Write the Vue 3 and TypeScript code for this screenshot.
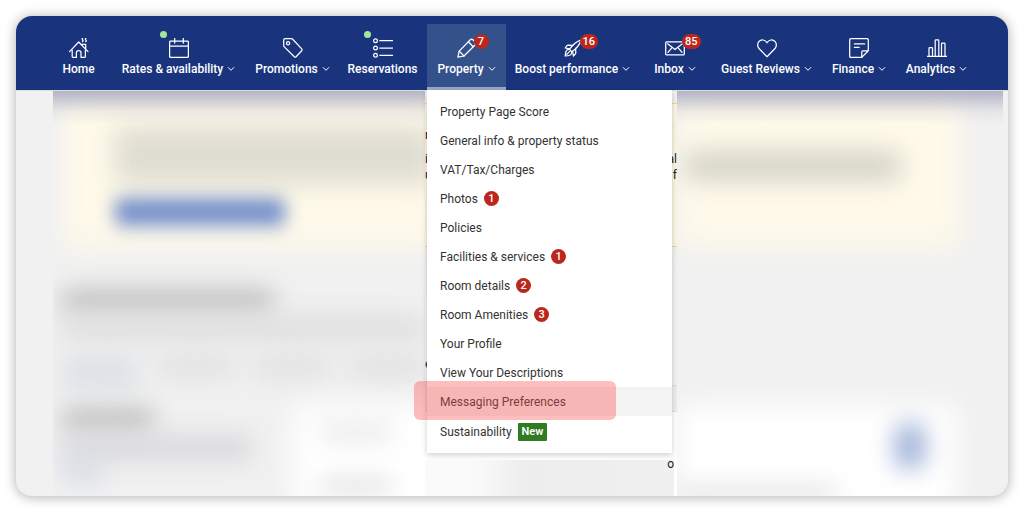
<script setup lang="ts">
interface NavItem {
  id: string
  label: string
  menu: boolean
  icon: string[]
  dot?: boolean
  badge?: number
}

interface MenuEntry {
  label: string
  count?: number
  tag?: string
  active?: boolean
}

const navItems: NavItem[] = [
  {
    id: 'home', label: 'Home', menu: false,
    icon: [
      'M.6 13.6 9.7 4l9.3 9.6',
      'M3.2 12.2v6.3q0 .8.8.8h3.4v-4.6q0-2 2.3-2t2.3 2v4.6h3.6q.8 0 .8-.8v-6.3',
      'M12.8 6.3h3.9v4.3',
      'M13.6.3q-.9.9 0 1.7t0 1.7M16.8.3q-.9.9 0 1.7t0 1.7',
    ],
  },
  {
    id: 'rates', label: 'Rates & availability', menu: true, dot: true,
    icon: ['M1.6 3.2h16.8q1 0 1 1v14.1q0 1-1 1H1.6q-1 0-1-1V4.2q0-1 1-1ZM.6 8h18.8', 'M5.7.5v4.6M14.3.5v4.6'],
  },
  {
    id: 'promotions', label: 'Promotions', menu: true,
    icon: ['M.7 2.2Q.7.7 2.2.7h6.1q.8 0 1.4.6l9 9.6q.8.9 0 1.8l-5.6 6q-.9.8-1.8 0L1.3 8.9Q.7 8.3.7 7.5Z', 'M3.5 5.2a1.6 1.6 0 1 0 3.2 0a1.6 1.6 0 1 0-3.2 0'],
  },
  {
    id: 'reservations', label: 'Reservations', menu: false, dot: true,
    icon: [
      'M.6 2.7a1.9 1.9 0 1 0 3.8 0a1.9 1.9 0 1 0-3.8 0M.6 10a1.9 1.9 0 1 0 3.8 0a1.9 1.9 0 1 0-3.8 0M.6 17.3a1.9 1.9 0 1 0 3.8 0a1.9 1.9 0 1 0-3.8 0',
      'M6.8 2.7h12.8M6.8 10h12.8M6.8 17.3h12.8',
    ],
  },
  {
    id: 'property', label: 'Property', menu: true, badge: 7,
    icon: ['M.9 19.1l1.3-6L13.3 1.7q1.3-1.3 2.6 0l2.4 2.4q1.3 1.3 0 2.6L7 18Z', 'M2.2 13.1 7 18M11.3 3.8l4.9 4.9'],
  },
  {
    id: 'boost', label: 'Boost performance', menu: true, badge: 16,
    icon: [
      'M6.4 11.4C8.8 8 13 3.4 18.2 1.8C16.6 7 12.4 11.4 8.8 13.8Z',
      'M9.8 7.4 5.2 7.2Q4.2 7.2 3.6 8L2.2 10l4.6.8M12.6 10.4l.2 4.2q0 1-.7 1.700L10.400 18l-.8-4.600',
      'M6.4 11.4Q4.200 11 3.200 13Q2.400 15 2.200 18Q5.200 17.900 7.200 17Q9.200 16 8.800 13.800M3.800 16.400 6.800 13.400',
    ],
  },
  {
    id: 'inbox', label: 'Inbox', menu: true, badge: 85,
    icon: ['M1.6 3.8h16.8q.9 0 .9.9v11.2q0 .9-.9.9H1.6q-.9 0-.9-.9V4.7q0-.9.9-.9Z', 'M2.6 5.8 10 11.5l7.4-5.7M3 14.4l3.4-4.1M17 14.4l-3.4-4.1'],
  },
  {
    id: 'reviews', label: 'Guest Reviews', menu: true,
    icon: ['M10 18.7 2 10.5C.3 8.7.2 5.6 1.8 3.7C4.2 1 8.2 1.5 10 4.8C11.8 1.5 15.8 1 18.2 3.7C19.8 5.6 19.7 8.7 18 10.5Z'],
  },
  {
    id: 'finance', label: 'Finance', menu: true,
    icon: ['M12.8 19.4H1.7q-1 0-1-1V1.7q0-1 1-1h16.6q1 0 1 1v11.1Zv-5.6q0-1 1-1h5.5', 'M5.3 5.9h10.4M5.3 9.3h4.9'],
  },
  {
    id: 'analytics', label: 'Analytics', menu: true,
    icon: ['M.4 18.4h19.2', 'M2 18.4v-8q0-.8.8-.8h1.9q.8 0 .8.8v8M8.2 18.4V2.6q0-.8.8-.8h2q.8 0 .8.8v15.8M14.5 18.4V6q0-.8.8-.8h1.9q.8 0 .8.8v12.4'],
  },
]

const menuEntries: MenuEntry[] = [
  { label: 'Property Page Score' },
  { label: 'General info & property status' },
  { label: 'VAT/Tax/Charges' },
  { label: 'Photos', count: 1 },
  { label: 'Policies' },
  { label: 'Facilities & services', count: 1 },
  { label: 'Room details', count: 2 },
  { label: 'Room Amenities', count: 3 },
  { label: 'Your Profile' },
  { label: 'View Your Descriptions' },
  { label: 'Messaging Preferences', active: true },
  { label: 'Sustainability', tag: 'New' },
]
</script>

<template>
  <div class="page">
    <div class="window">
      <nav class="nav" aria-label="Main">
        <div v-for="item in navItems" :key="item.id" class="nav-cell">
          <component
            :is="item.menu ? 'button' : 'a'"
            class="nav-item"
            :class="{ open: item.id === 'property' }"
            :href="item.menu ? undefined : '#'"
            :type="item.menu ? 'button' : undefined"
            :aria-expanded="item.menu ? item.id === 'property' : undefined"
          >
            <span class="icon-box">
              <svg class="icon" viewBox="0 0 20 20" aria-hidden="true">
                <path v-for="d in item.icon" :key="d" :d="d" />
              </svg>
              <span v-if="item.dot" class="dot"></span>
              <span v-if="item.badge" class="badge nav-badge">{{ item.badge }}</span>
            </span>
            <span class="nav-label">
              <span>{{ item.label }}</span>
              <svg v-if="item.menu" class="chevron" viewBox="0 0 8 8" aria-hidden="true">
                <path d="M1.2 2.5 4 5.3 6.8 2.5" />
              </svg>
            </span>
          </component>

          <ul v-if="item.id === 'property'" class="menu">
            <li v-for="entry in menuEntries" :key="entry.label">
              <a href="#" class="menu-link" :class="{ active: entry.active }">
                <span>{{ entry.label }}</span>
                <span v-if="entry.count" class="badge">{{ entry.count }}</span>
                <span v-if="entry.tag" class="tag">{{ entry.tag }}</span>
                <span v-if="entry.active" class="marker"></span>
              </a>
            </li>
          </ul>
        </div>
      </nav>

      <main class="content">
        <section class="patch left" aria-hidden="true">
          <div class="shade"></div>
          <div class="notice">
            <div class="soft notice-text"></div>
            <div class="soft notice-button"></div>
          </div>
          <div class="soft title"></div>
          <div class="soft subtitle"></div>
          <div class="tabs">
            <div class="soft tab link"></div>
            <div class="soft tab"></div>
            <div class="soft tab"></div>
            <div class="soft tab"></div>
          </div>
          <div class="columns">
            <div class="summary">
              <div class="soft summary-title"></div>
              <div class="soft summary-text"></div>
              <div class="soft summary-link"></div>
            </div>
            <div class="soft-card">
              <div class="soft card-line"></div>
              <div class="soft card-line wide"></div>
            </div>
          </div>
        </section>

        <section class="middle">
          <div class="alert">
            <p><span>r</span></p>
            <p class="second"><span>i</span><span>al</span></p>
            <p><span>u</span><span>f</span></p>
          </div>
          <p class="tab-text">e</p>
          <div class="divider"></div>
          <div class="sheet">
            <div class="sheet-foot"><span>o</span></div>
          </div>
        </section>

        <section class="patch right" aria-hidden="true">
          <div class="shade"></div>
          <div class="notice">
            <div class="soft notice-text"></div>
          </div>
          <div class="soft-card">
            <div class="soft toggle"></div>
            <div class="soft card-line"></div>
          </div>
        </section>
      </main>
    </div>
  </div>
</template>

<style>
body {
  margin: 0;
  background: #fff;
}
</style>

<style scoped>
* {
  box-sizing: border-box;
}

.page {
  display: flex;
  min-height: 100vh;
  padding: 16px;
  font-family: Roboto, "Liberation Sans", sans-serif;
  font-size: 12px;
  color: #333;
}

.window {
  display: flex;
  flex: 1;
  flex-direction: column;
  min-width: 0;
  overflow: hidden;
  border-radius: 16px;
  background: #f1f1f1;
  box-shadow: 0 1px 12px 1px rgba(0, 0, 0, 0.28);
}

.nav {
  display: grid;
  grid-template-columns: 63fr 137fr 91fr 89fr 79fr 133fr 72fr 111fr 74fr 81fr;
  height: 74px;
  padding: 8px 31px 0;
  background: #19347d;
}

.nav-cell {
  position: relative;
  display: flex;
  min-width: 0;
}

.nav-item {
  display: flex;
  flex: 1;
  flex-direction: column;
  align-items: center;
  min-width: 0;
  padding: 14px 0 0;
  border: 0;
  border-bottom: 3px solid transparent;
  background: none;
  color: #fff;
  font: 500 12px/16px Roboto, "Liberation Sans", sans-serif;
  text-decoration: none;
  white-space: nowrap;
}

.nav-item.open {
  border-bottom-color: #9da8ca;
  background: #33518b;
  background-clip: padding-box;
}

.icon-box {
  position: relative;
  width: 20px;
  height: 20px;
}

.icon,
.chevron {
  display: block;
  fill: none;
  stroke: currentColor;
  stroke-linecap: round;
  stroke-linejoin: round;
}

.icon {
  width: 20px;
  height: 20px;
  stroke-width: 1.25;
}

.chevron {
  width: 8px;
  height: 8px;
  stroke-width: 1;
}

.nav-label {
  display: flex;
  align-items: center;
  gap: 4px;
  margin-top: 3px;
}

.dot {
  position: absolute;
  top: -7px;
  left: -9px;
  width: 7px;
  height: 7px;
  border-radius: 50%;
  background: #a5e4a0;
}

.badge {
  min-width: 15px;
  height: 15px;
  padding: 0 3px;
  border-radius: 8px;
  background: #bb271c;
  color: #fff;
  font-size: 11px;
  font-weight: 500;
  line-height: 15px;
  text-align: center;
}

.nav-badge {
  position: absolute;
  top: -4px;
  left: 17px;
}

.menu {
  position: absolute;
  z-index: 2;
  top: 66px;
  left: 0;
  width: 245px;
  margin: 0;
  padding: 7px 0 6px;
  background: #fff;
  box-shadow: 0 2px 6px rgba(0, 0, 0, 0.2);
  list-style: none;
}

.menu-link {
  position: relative;
  display: flex;
  align-items: center;
  gap: 6px;
  height: 29px;
  padding: 0 13px;
  color: #333;
  text-decoration: none;
  white-space: nowrap;
}

.menu li:last-child .menu-link {
  height: 31px;
}

.menu-link.active {
  background: #f3f3f3;
}

.tag {
  height: 18px;
  padding: 0 4px;
  border-radius: 1px;
  background: #317c22;
  color: #fff;
  font-size: 11px;
  font-weight: 600;
  line-height: 18px;
}

.marker {
  position: absolute;
  inset: -6px 56px -4px -13px;
  border-radius: 6px;
  background: rgba(255, 75, 75, 0.36);
}

.content {
  display: grid;
  flex: 1;
  grid-template-columns: minmax(0, 372fr) minmax(0, 252fr) minmax(0, 326fr);
  padding: 0 5px 0 37px;
  border-top: 1px solid #dcdee6;
}

.patch {
  position: relative;
  overflow: hidden;
}

.shade {
  position: absolute;
  z-index: 1;
  inset: 0 0 auto;
  height: 34px;
  background: linear-gradient(rgba(90, 93, 135, 0.42), rgba(90, 93, 135, 0.3) 20%, rgba(90, 93, 135, 0.08) 60%, rgba(90, 93, 135, 0));
}

.soft {
  border-radius: 6px;
  background: #e2e2e2;
  filter: blur(12px);
}

.notice {
  position: relative;
  height: 161px;
}

.notice::before {
  position: absolute;
  inset: 10px 0 6px 10px;
  background: #fef9e9;
  content: "";
  filter: blur(14px);
}

.left .notice {
  padding: 36px 0 0 62px;
}

.left .notice::before {
  right: -20px;
}

.left .notice-text {
  height: 57px;
  margin-right: -8px;
  background: #dfddd2;
}

.notice-button {
  width: 170px;
  height: 28px;
  margin-top: 14px;
  background: #7590ca;
  filter: blur(9px);
}

.title {
  width: 212px;
  height: 22px;
  margin: 38px 0 0 9px;
  background: #bcbcbc;
}

.subtitle {
  height: 24px;
  margin: 4px 0 0 9px;
  background: #dedede;
}

.tabs {
  display: flex;
  gap: 20px;
  height: 57px;
  padding: 16px 0 0 9px;
}

.tab {
  width: 84px;
  height: 22px;
  background: #e0e0e0;
}

.tab.link {
  height: 34px;
  background: #dce1e6;
}

.columns {
  display: flex;
  gap: 41px;
  height: 99px;
  padding-left: 9px;
}

.summary {
  width: 190px;
  padding-top: 12px;
}

.summary-title {
  width: 92px;
  height: 22px;
  background: #bcbcbc;
}

.summary-text {
  height: 26px;
  margin-top: 4px;
  background: #d8d9dc;
}

.summary-link {
  width: 40px;
  height: 20px;
  background: #d4d9e6;
}

.soft-card {
  position: relative;
}

.soft-card::before {
  position: absolute;
  inset: 8px -20px -20px 0;
  background: #fff;
  content: "";
  filter: blur(14px);
}

.left .soft-card {
  flex: 1;
  padding: 26px 32px 0 26px;
}

.left .card-line {
  height: 18px;
  background: #e9e9e9;
}

.left .card-line.wide {
  height: 14px;
  margin-top: 38px;
  background: #dcdcdc;
}

.right .notice::before {
  right: 42px;
  left: 0;
}

.right .notice {
  padding: 60px 103px 0 8px;
}

.right .notice-text {
  height: 30px;
  background: #d5d4c8;
}

.right .soft-card {
  height: 99px;
  margin-top: 145px;
  padding-top: 27px;
}

.right .soft-card::before {
  right: 46px;
  left: 0;
}

.toggle {
  width: 30px;
  height: 44px;
  margin: 0 78px 0 auto;
  background: #9fb1d8;
}

.right .card-line {
  width: 160px;
  height: 12px;
  margin-top: 20px;
  background: #d8d8d8;
}

.middle {
  overflow: hidden;
}

.alert {
  height: 144px;
  margin-top: 12px;
  padding-top: 23px;
  border: solid #f0d78e;
  border-width: 1px 0;
  background: #fbf6e2;
}

.middle p {
  display: flex;
  justify-content: space-between;
  margin: 0;
  color: #1a1a1a;
  font-size: 12px;
  line-height: 16px;
}

.middle .second {
  margin-top: 8px;
}

.middle .tab-text {
  margin-top: 109px;
}

.divider {
  height: 27px;
  margin-top: 13px;
  border: solid #dcdcdc;
  border-width: 1px 0;
  background: #ededed;
}

.sheet {
  height: 84px;
  padding: 48px 3px 0 0;
  background: #fff;
}

.sheet-foot {
  display: flex;
  justify-content: flex-end;
  height: 36px;
  background: linear-gradient(90deg, #fafafa 20%, #ededed 40%, #f0f0f0);
  color: #1a1a1a;
  font-size: 12px;
  line-height: 9px;
}
</style>
